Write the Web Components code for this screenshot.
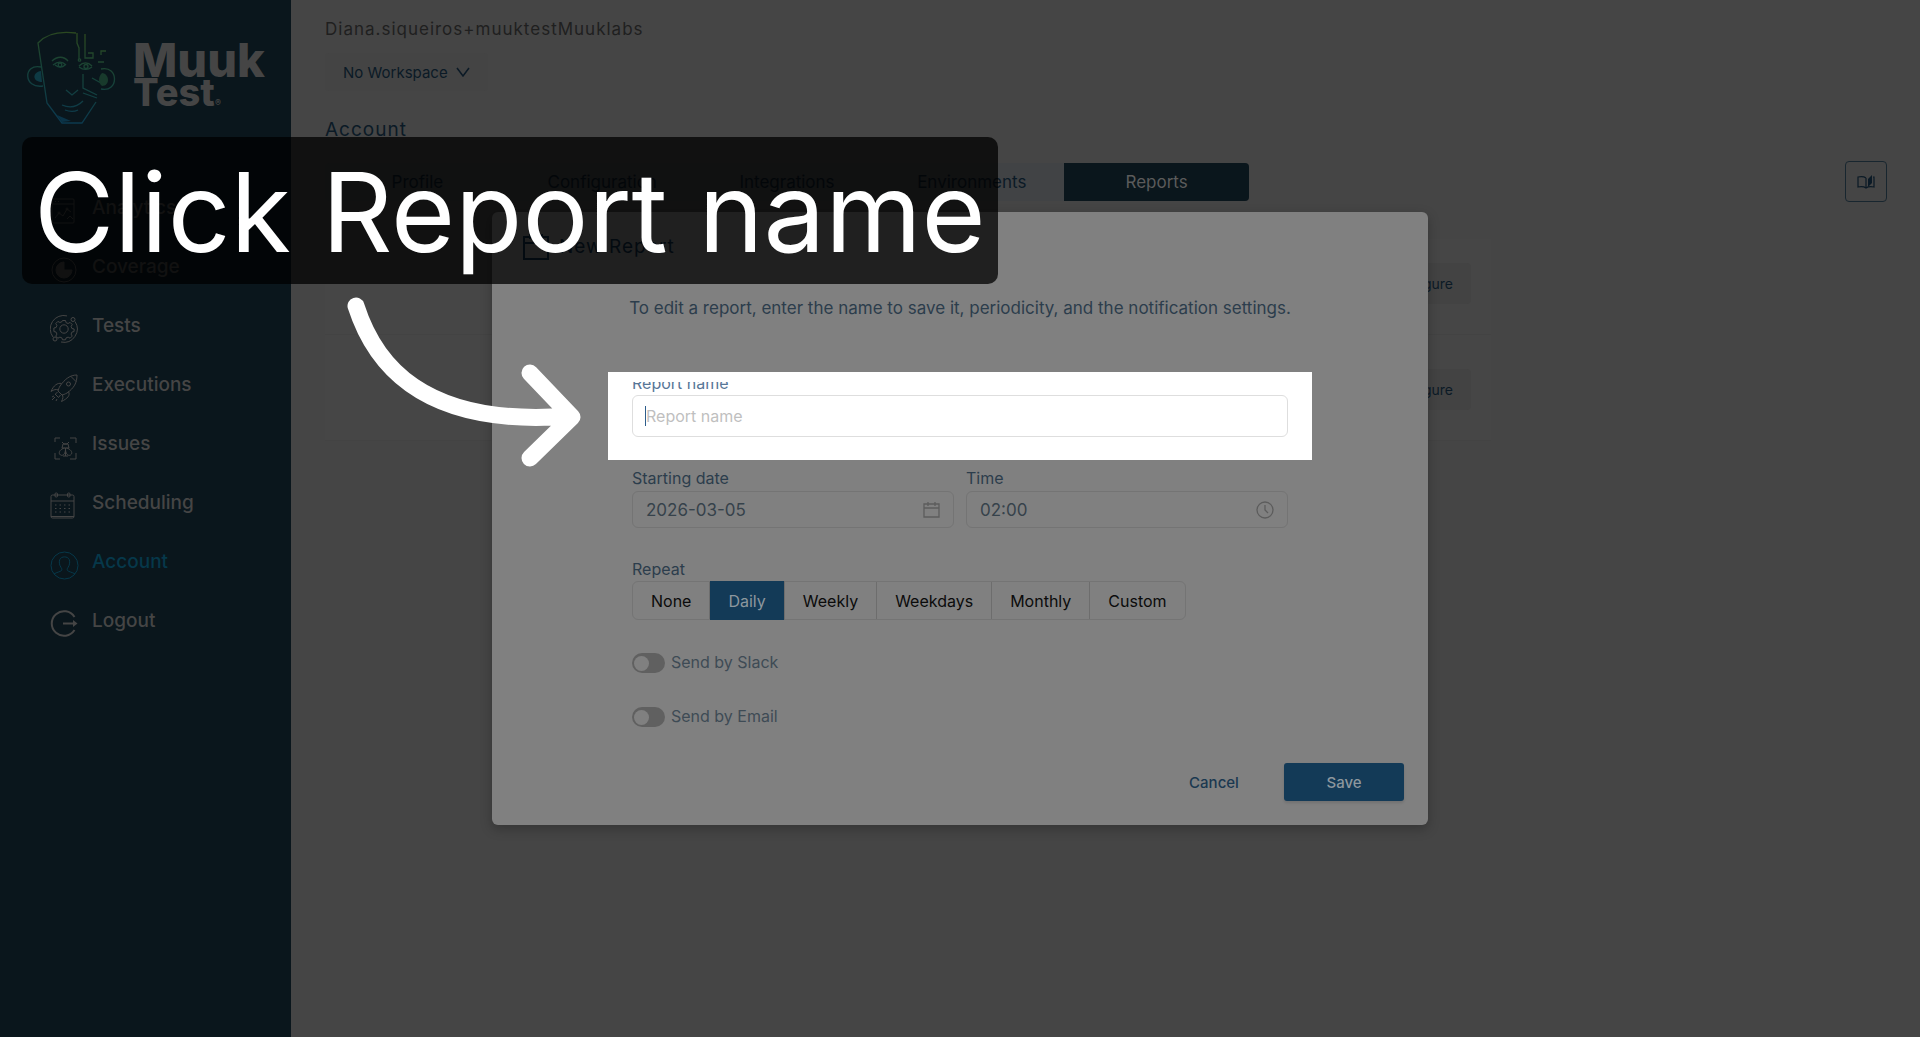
<!DOCTYPE html>
<html lang="en">
<head>
<meta charset="utf-8">
<title>MuukTest – Reports</title>
<style>
html,body{height:100%}
body{margin:0;background:#454545;font-family:Inter,"Liberation Sans",sans-serif;overflow:hidden}
</style>
</head>
<body>
<muuk-app></muuk-app>
<script>
const define = (name, html, setup) => {
  const tpl = document.createElement('template');
  tpl.innerHTML = '<style>*{box-sizing:border-box}button,input{font:inherit;margin:0}</style>' + html;
  customElements.define(name, class extends HTMLElement {
    constructor() {
      super();
      this.attachShadow({mode: 'open'}).append(tpl.content.cloneNode(true));
    }
    connectedCallback() { if (setup) setup(this, this.shadowRoot); }
  });
};

const ICONS = {
  analytics: '<rect x="2" y="2" width="22" height="24" rx="1"/><path d="M2 7h22M5 4.500h1M8 4.500h1M5 21l4-5 4 3 4-7 4 3"/><circle cx="9" cy="16" r="1"/><circle cx="17" cy="12" r="1"/><path d="M17 22l3-3 3 3"/>',
  coverage: '<ellipse cx="14" cy="14" rx="12" ry="12"/><path d="M14 6a8 8 0 1 0 8 8h-8z" fill="currentColor"/>',
  tests: '<circle cx="14" cy="14" r="4.200"/><path d="M12.500 5.500h3l.6 2.200 2 .8 2-1.100 2.100 2.100-1.100 2 .8 2 2.200.5v2.500l-2.200.6-.8 2 1.100 2-2.100 2.100-2-1.100-2 .8-.6 1.900h-3l-.6-1.900-2-.8-2 1.100-2.100-2.100 1.100-2-.8-2-2.200-.6V13l2.200-.5.8-2-1.100-2 2.100-2.100 2 1.100 2-.8z"/><path d="M17 .9A13.400 13.400 0 0 0 3 22M11 27A13.400 13.400 0 0 0 25 6.500"/><circle cx="23" cy="4.500" r="2"/><circle cx="5" cy="24" r="2"/>',
  rocket: '<path d="M27 1c-7 0-12 4-17 11-1 2-2 4-2 5l4 4c1 0 3-1 5-2 7-5 10-10 10-18zM21 2.500l5 5"/><circle cx="18.500" cy="10" r="2"/><path d="M11.500 9.500c-4-1-8 2-10.500 8 3-2 5-2.500 7.500-1.500M18.500 17.500c2 4-1 7-7 10 1.500-3 2-5 .5-7M7.500 18l-2 2M10.500 21l-2 2.500M5 20l3.500 3.500M5 23l-3 3M7 25l-1 2M4 22l-2 1"/>',
  issues: '<path d="M5 9V5h5M20 5h6v5M26 20v6h-6M10 26H5v-6"/><path d="M12 9l2 2h3l2-2M13 11l-1 4h7l-1-4zM15.500 15v8M14.500 15c-4 1-6 4-5 6 2 3 6 1 6-5 0 6 4 8 6 5 1-2-1-5-5-6M13 23h5"/>',
  calendar: '<rect x="1" y="3" width="23" height="23" rx="1.500"/><path d="M1 9h23M1 24.500h23"/><rect x="5" y="1" width="2.500" height="4" rx="1"/><rect x="17.500" y="1" width="2.500" height="4" rx="1"/><path d="M5 13h16M5 16.500h16M5 20h16" stroke-dasharray="1.500 3"/>',
  user: '<circle cx="14.500" cy="14.500" r="13.500"/><path d="M4 23c3-2 6-2 7.500-3.500.6-1 .4-2-.5-3-2-3-2-6-1.200-8 1.500-3.500 7.900-3.500 9.400 0 .8 2 .8 5-1.200 8-.9 1-1.100 2-.5 3C19 21 22 21 25 23"/>',
  logout: '<path d="M24.500 20A12.300 12.300 0 1 1 24.500 7" stroke-width="2"/><path d="M13 13.500h11" stroke-width="2"/><path d="M23 10l4.500 3.500L23 17z" fill="currentColor" stroke="none"/>'
};

define('nav-item', `
<style>
:host{display:block}
a{display:flex;align-items:center;gap:12px;height:59px;color:#454545;text-decoration:none;font-weight:500;font-size:19px;line-height:24px}
:host([active]) a{color:#06384a}
svg{width:30px;height:30px;flex:none;margin-top:8px;fill:none;stroke:currentColor;stroke-width:1}
</style>
<a href="#"><svg viewBox="0 0 30 30"></svg><span><slot></slot></span></a>`,
(el, root) => { root.querySelector('svg').innerHTML = ICONS[el.getAttribute('icon')]; });

define('muuk-logo', `
<style>
:host{display:flex;align-items:center;gap:15px}
svg{width:92px;height:98px;flex:none;fill:none;stroke-width:1.300}
.word{color:#454545;font-weight:800;font-size:47px;line-height:33px;padding-top:5px}
.word div + div{font-size:38px}
small{font-size:9px}
</style>
<svg viewBox="0 0 92 98">
<defs><linearGradient id="g" gradientUnits="userSpaceOnUse" x1="60" y1="0" x2="40" y2="98"><stop offset="0" stop-color="#2f4a1c"/><stop offset=".45" stop-color="#164238"/><stop offset="1" stop-color="#0a3850"/></linearGradient></defs>
<g stroke="url(#g)">
<path d="M50 4C34 2 20 5 12 14l9 60 15 20h20l14-21"/>
<path d="M51 4v10l2 5v11M59 5v24h8v-5h-5M80 22h-5v4M72 33h6"/>
<circle cx="53.500" cy="31" r="1.200"/>
<path d="M26 32c5-5 12-5 16 0M27 36c5-4 9-4 13 0M29 36c4 3 7 3 10 0M53 37c4-4 9-4 13 0M53 38c4 3 9 3 13 0"/>
<circle cx="34" cy="36" r="1.800"/><circle cx="60" cy="37.500" r="2"/>
<path d="M40 61l6 5 6-5M36 76c7 3 15 2 21-4M39 81c5 2 9 2 13 0M57 45v14l14 7M57 64l14 5M66 49l9 5"/>
<path d="M15 38c-18-4-18 22 2 19M75 40c18-4 18 24 0 20"/></g>
<path d="M15 42c-9 1-9 11 1 11z" fill="#0e3a44"/><path d="M76 44c8 1 8 13 0 13-4-3-4-9 0-13z" fill="#183a2c"/><path d="M31 86l5 7 9-1z" fill="#0b3347"/>
</svg>
<div class="word"><div>Muuk</div><div>Test<small>®</small></div></div>`);

define('side-bar', `
<style>
:host{display:block;width:291px;flex:none;background:#0a161c}
muuk-logo{margin:28px 0 0 26px;height:100px}
nav{margin:50px 0 0 50px}
</style>
<muuk-logo></muuk-logo>
<nav>
<nav-item icon="analytics">Analytics</nav-item>
<nav-item icon="coverage">Coverage</nav-item>
<nav-item icon="tests">Tests</nav-item>
<nav-item icon="rocket">Executions</nav-item>
<nav-item icon="issues">Issues</nav-item>
<nav-item icon="calendar">Scheduling</nav-item>
<nav-item icon="user" active>Account</nav-item>
<nav-item icon="logout">Logout</nav-item>
</nav>`);

define('tab-bar', `
<style>
:host{display:flex;width:924px;height:38px;border-radius:4px;overflow:hidden;background:#414345}
button{flex:1;border:0;padding:0;background:none;color:#0b1a26;font-size:17px;line-height:20px}
button[aria-selected=true]{background:#0a161c;color:#5b5b5b}
</style>
<button role="tab">Profile</button><button role="tab">Configuration</button><button role="tab">Integrations</button><button role="tab">Environments</button><button role="tab" aria-selected="true">Reports</button>`);

define('setting-row', `
<style>
:host{display:flex;justify-content:flex-end;padding:24px 20px 30px;border-bottom:1px solid #434343}
button{height:41px;padding:0 18px;border:0;border-radius:4px;background:#434343;color:#0b1a26;font-size:14px}
</style>
<button>Configure</button>`);

define('account-page', `
<style>
:host{display:block;flex:1;min-width:0;padding:18px 33px 0 34px}
.org{font-size:17px;line-height:22px;letter-spacing:1px;color:#1f1f1f}
.ws{display:flex;align-items:center;gap:8px;height:38px;margin:13px 0 0;padding:0 18px;border:0;border-radius:4px;background:#444;color:#0b1a26;font-size:15px}
h1{margin:26px 0 0;font-weight:400;font-size:19px;line-height:26px;letter-spacing:1px;color:#0b1a26}
.bar{display:flex;justify-content:space-between;align-items:center;margin-top:18px}
.guide{width:42px;height:41px;padding:0;border:1px solid #18262f;border-radius:4px;background:none;display:grid;place-items:center}
.card{width:1166px;margin-top:37px;background:#464646}
setting-row + setting-row{margin-top:10px}
</style>
<div class="org">Diana.siqueiros+muuktestMuuklabs</div>
<button class="ws">No Workspace <svg width="14" height="10" viewBox="0 0 14 10" fill="none" stroke="#0b1a26" stroke-width="1.500"><path d="M1 1l6 8 6-8"/></svg></button>
<h1>Account</h1>
<div class="bar"><tab-bar role="tablist"></tab-bar>
<button class="guide" aria-label="Guide"><svg width="18" height="16" viewBox="0 0 18 16" fill="none" stroke="#0b1a26" stroke-width="1.200"><path d="M9 4C7 2.500 4 2.500 1 3v10c3-.5 6-.5 8 1 2-1.500 5-1.500 8-1V3h-1M9 4v10"/><path d="M11 5l4-4v8l-4 4z" fill="#0b1a26" stroke="none"/></svg></button></div>
<div class="card"><setting-row></setting-row><setting-row></setting-row></div>`);

define('labelled-input', `
<style>
:host{display:block;flex:1;min-width:0}
label{display:block;color:#2c3d4c;font-size:16px;line-height:20px;padding-bottom:3px}
.box{display:flex;align-items:center;height:37px;padding:0 13px;border:1px solid #747474;border-radius:6px;color:#36424b}
input{flex:1;min-width:0;width:0;border:0;padding:0;background:none;outline:0;color:#36424b;font-size:17px;line-height:20px}
::slotted(svg){flex:none}
:host([spotlit]) label{color:#587697;height:13px;overflow:hidden;display:flex;align-items:flex-end;padding-bottom:2px}
:host([spotlit]) .box{height:42px;padding:0 12px;border-color:#dedede}
:host([spotlit]) .caret{width:1px;height:20px;background:#2d5d8c}
:host([spotlit]) input{font-size:16px}
input::placeholder{color:#bfbfbf;opacity:1}
</style>
<label for="f"></label><div class="box"><span class="caret"></span><input id="f"><slot></slot></div>`,
(el, root) => {
  root.querySelector('label').textContent = el.getAttribute('label');
  const i = root.querySelector('input');
  i.value = el.getAttribute('value') || '';
  i.placeholder = el.getAttribute('placeholder') || '';
});

define('repeat-picker', `
<style>
:host{display:block;color:#2c3d4c}
.l{font-size:16px;line-height:20px;padding-bottom:2px}
.g{display:inline-flex;height:39px;border:1px solid #747474;border-radius:6px}
button{border:0;border-right:1px solid #6d6d6d;padding:0 18px;background:none;color:#0b0b0b;font-size:16px}
button:last-child{border:0}
button[aria-pressed=true]{background:#133a57;color:#8d979e;margin:-1px 0}
</style>
<div class="l" id="l">Repeat</div>
<div class="g" role="group" aria-labelledby="l"><button>None</button><button aria-pressed="true">Daily</button><button>Weekly</button><button>Weekdays</button><button>Monthly</button><button>Custom</button></div>`);

define('toggle-switch', `
<style>
:host{display:block}
label{display:flex;align-items:center;gap:6px;height:24px;color:#3e4b55;font-size:16px;line-height:20px}
input{appearance:none;width:33px;height:20px;border-radius:10px;background:#606060;display:flex;align-items:center;padding:0 2px;margin-top:2px}
input::before{content:"";width:15px;height:15px;border-radius:50%;background:#808080}
</style>
<label><input type="checkbox" role="switch"><slot></slot></label>`);

define('report-dialog', `
<style>
:host{position:absolute;left:50%;top:212px;width:936px;margin-left:-468px;background:#808080;border-radius:6px;box-shadow:0 4px 12px rgba(0,0,0,.25)}
header{display:flex;align-items:center;gap:10px;padding:21px 0 0 31px;color:#0e2a40}
h2{margin:0;font-weight:400;font-size:19px;line-height:28px;letter-spacing:1px}
p{margin:35px 0 0;text-align:center;font-size:17px;line-height:24px;color:#2c3d4c}
.spot{margin:52px 116px 0;padding:10px 24px 23px;background:#fff}
.body{margin:8px 140px 0}
.pair{display:flex;gap:12px}
repeat-picker{margin-top:31px}
toggle-switch{margin-top:30px}
footer{display:flex;justify-content:flex-end;gap:10px;padding:35px 24px 24px}
footer button{width:120px;height:38px;border:0;border-radius:3px;font-size:15px;font-weight:500;background:none;color:#1a3850}
footer .save{background:#133a57;color:#8d979e;box-shadow:0 2px 3px rgba(0,0,0,.12)}
</style>
<header><svg width="26" height="28" viewBox="0 0 26 28" fill="none" stroke="currentColor" stroke-width="2"><path d="M1 4h24v22H1zM1 10h24M7 1v5M19 1v5"/></svg><h2>New Report</h2></header>
<p>To edit a report, enter the name to save it, periodicity, and the notification settings.</p>
<div class="spot"><labelled-input spotlit label="Report name" placeholder="Report name"></labelled-input></div>
<div class="body">
<div class="pair">
<labelled-input label="Starting date" value="2026-03-05"><svg width="17" height="17" viewBox="0 0 17 17" fill="none" stroke="#5c5c5c" stroke-width="1.300"><path d="M1 3h15v13H1zM1 7h15M5 1v4M12 1v4"/></svg></labelled-input>
<labelled-input label="Time" value="02:00"><svg width="18" height="18" viewBox="0 0 18 18" fill="none" stroke="#5c5c5c" stroke-width="1.300"><circle cx="9" cy="9" r="8"/><path d="M9 4v5l3 3"/></svg></labelled-input>
</div>
<repeat-picker></repeat-picker>
<toggle-switch>Send by Slack</toggle-switch>
<toggle-switch>Send by Email</toggle-switch>
</div>
<footer><button>Cancel</button><button class="save">Save</button></footer>`);

define('coach-mark', `
<style>
:host{position:absolute;left:22px;top:137px;color:#fff}
.tip{width:max-content;padding:4px 12px 0;border-radius:10px;background:rgba(0,0,0,.75);font-size:110px;line-height:143px;white-space:nowrap}
svg{display:block;margin:11px 0 0 318px}
</style>
<div class="tip">Click Report name</div>
<svg width="250" height="180" viewBox="340 295 250 180" fill="none" stroke="#fff" stroke-width="17" stroke-linecap="round" stroke-linejoin="round"><path d="M356 306C374 362 420 428 570 416M530 373L572 417L530 458"/></svg>`);

define('muuk-app', `
<style>:host{display:flex;position:relative;height:100%;min-height:100vh;overflow:hidden}</style>
<side-bar></side-bar><account-page></account-page><report-dialog role="dialog"></report-dialog><coach-mark></coach-mark>`);
</script>
</body>
</html>
